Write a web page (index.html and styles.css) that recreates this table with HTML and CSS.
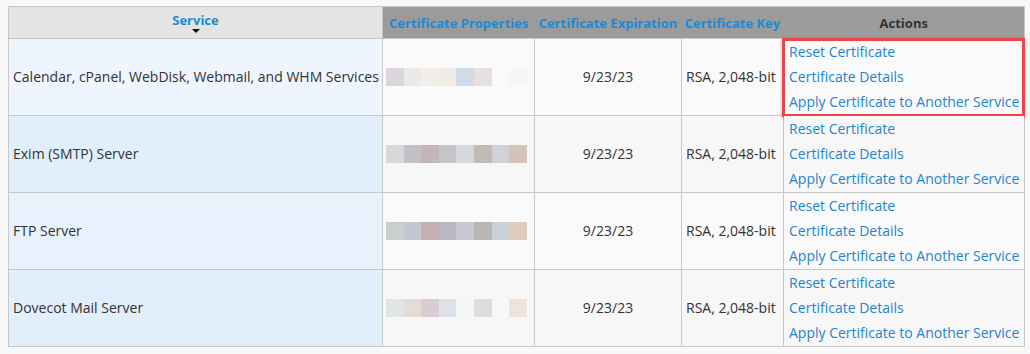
FILE: index.html
```html
<!DOCTYPE html>
<html>
<head>
<meta charset="utf-8">
<link rel="stylesheet" href="styles.css">
</head>
<body>
<div class="page">
  <table class="certs">
    <colgroup>
      <col class="c-service">
      <col class="c-props">
      <col class="c-exp">
      <col class="c-key">
      <col class="c-actions">
    </colgroup>
    <thead>
      <tr>
        <th class="h-service"><a class="sort">Service</a><span class="caret"></span></th>
        <th class="h-dark"><a class="sort">Certificate Properties</a></th>
        <th class="h-dark"><a class="sort">Certificate Expiration</a></th>
        <th class="h-dark"><a class="sort">Certificate Key</a></th>
        <th class="h-dark h-actions">Actions</th>
      </tr>
    </thead>
    <tbody>
      <tr class="row light">
        <td class="service first">Calendar, cPanel, WebDisk, Webmail, and WHM Services</td>
        <td class="props"><div class="blur">
          <span style="background:#dcd6dc"></span><span style="background:#ebeaea"></span><span style="background:#f3efe8"></span><span style="background:#efece6"></span><span style="background:#cfdbe6"></span><span style="background:#e6e1de"></span><span style="background:#fafafa"></span><span style="background:#f5f6f7"></span>
        </div></td>
        <td class="exp">9/23/23</td>
        <td class="key">RSA, 2,048-bit</td>
        <td class="actions"><a>Reset Certificate</a><a>Certificate Details</a><a>Apply Certificate to Another Service</a><div class="highlight"></div></td>
      </tr>
      <tr class="row">
        <td class="service">Exim (SMTP) Server</td>
        <td class="props"><div class="blur">
          <span style="background:#d6d9d7"></span><span style="background:#bfc1c4"></span><span style="background:#c5b4b8"></span><span style="background:#c6c5c6"></span><span style="background:#d5d9de"></span><span style="background:#c0bbb6"></span><span style="background:#cfd3d8"></span><span style="background:#d4c3b8"></span>
        </div></td>
        <td class="exp">9/23/23</td>
        <td class="key">RSA, 2,048-bit</td>
        <td class="actions"><a>Reset Certificate</a><a>Certificate Details</a><a>Apply Certificate to Another Service</a></td>
      </tr>
      <tr class="row light">
        <td class="service">FTP Server</td>
        <td class="props"><div class="blur">
          <span style="background:#cbcfcb"></span><span style="background:#c2c8d1"></span><span style="background:#c4b0b3"></span><span style="background:#b9b9c6"></span><span style="background:#c9c8d1"></span><span style="background:#b8b6b3"></span><span style="background:#c9d0d8"></span><span style="background:#ddcbbd"></span>
        </div></td>
        <td class="exp">9/23/23</td>
        <td class="key">RSA, 2,048-bit</td>
        <td class="actions"><a>Reset Certificate</a><a>Certificate Details</a><a>Apply Certificate to Another Service</a></td>
      </tr>
      <tr class="row">
        <td class="service">Dovecot Mail Server</td>
        <td class="props"><div class="blur">
          <span style="background:#e1e4e4"></span><span style="background:#e5ddd3"></span><span style="background:#d9cdd3"></span><span style="background:#dde2e8"></span><span style="background:#f2f6f5"></span><span style="background:#dddddd"></span><span style="background:#f7f7f7"></span><span style="background:#efe3db"></span>
        </div></td>
        <td class="exp">9/23/23</td>
        <td class="key">RSA, 2,048-bit</td>
        <td class="actions"><a>Reset Certificate</a><a>Certificate Details</a><a>Apply Certificate to Another Service</a></td>
      </tr>
    </tbody>
  </table>
</div>
</body>
</html>
```

FILE: styles.css
```css
html, body {
  margin: 0;
  padding: 0;
  background: #f8f8f8;
}
body {
  font-family: "Open Sans", "Liberation Sans", sans-serif;
  font-size: 14px;
  color: #333;
}
.page {
  padding: 6px 7px 8px 8px;
}
.certs {
  width: 1016px;
  border-collapse: collapse;
  table-layout: fixed;
  border: 1px solid #c8c8c8;
}
.c-service { width: 374px; }
.c-props { width: 152px; }
.c-exp { width: 147px; }
.c-key { width: 102px; }
.c-actions { width: 241px; }

thead th {
  height: 31px;
  padding: 0;
  font-size: 13px;
  font-weight: 700;
  text-align: center;
  vertical-align: middle;
  border-bottom: 1px solid #c8c8c8;
}
.h-service {
  background: #e4e4e4;
  border-right: 1px solid #c8c8c8;
  position: relative;
}
.h-service .sort {
  display: block;
  line-height: 16px;
  margin-top: -5px;
}
.caret {
  position: absolute;
  left: 50%;
  top: 22px;
  margin-left: -4px;
  width: 0;
  height: 0;
  border-left: 4px solid transparent;
  border-right: 4px solid transparent;
  border-top: 4px solid #111;
}
.h-dark {
  background: #9b9b9b;
}
.sort {
  color: #1b8ad8;
}
.h-actions {
  color: #333;
}

tbody td {
  padding: 0 4px 1px;
  height: 75px;
  border-bottom: 1px solid #c8c8c8;
  border-right: 1px solid #c8c8c8;
  vertical-align: middle;
  background: #f7f7f7;
  white-space: nowrap;
}
tbody tr.light td {
  background: #fafafa;
}
tbody td.service {
  background: #e1eefc;
}
tbody tr.light td.service {
  background: #e8f2fd;
}
tbody tr td.service.first {
  background: #eef5ff;
}
tbody td.props {
  padding: 0 3px;
}
.blur {
  display: flex;
  height: 18px;
}
.blur span {
  display: block;
  width: 17.6px;
  height: 18px;
  filter: blur(0.3px);
}
tbody td.exp {
  text-align: center;
}
tbody td.key {
  padding-left: 4px;
}
tbody td.actions {
  padding: 0 5px;
  vertical-align: top;
  position: relative;
  border-right: none;
}
.actions a {
  display: block;
  color: #2384d3;
  line-height: 25px;
}
.highlight {
  position: absolute;
  left: -2px;
  top: -1px;
  right: -1px;
  bottom: -2px;
  border: 3px solid #ee4347;
  box-shadow: 0 1px 3px rgba(0,0,0,0.25);
  pointer-events: none;
}
```
